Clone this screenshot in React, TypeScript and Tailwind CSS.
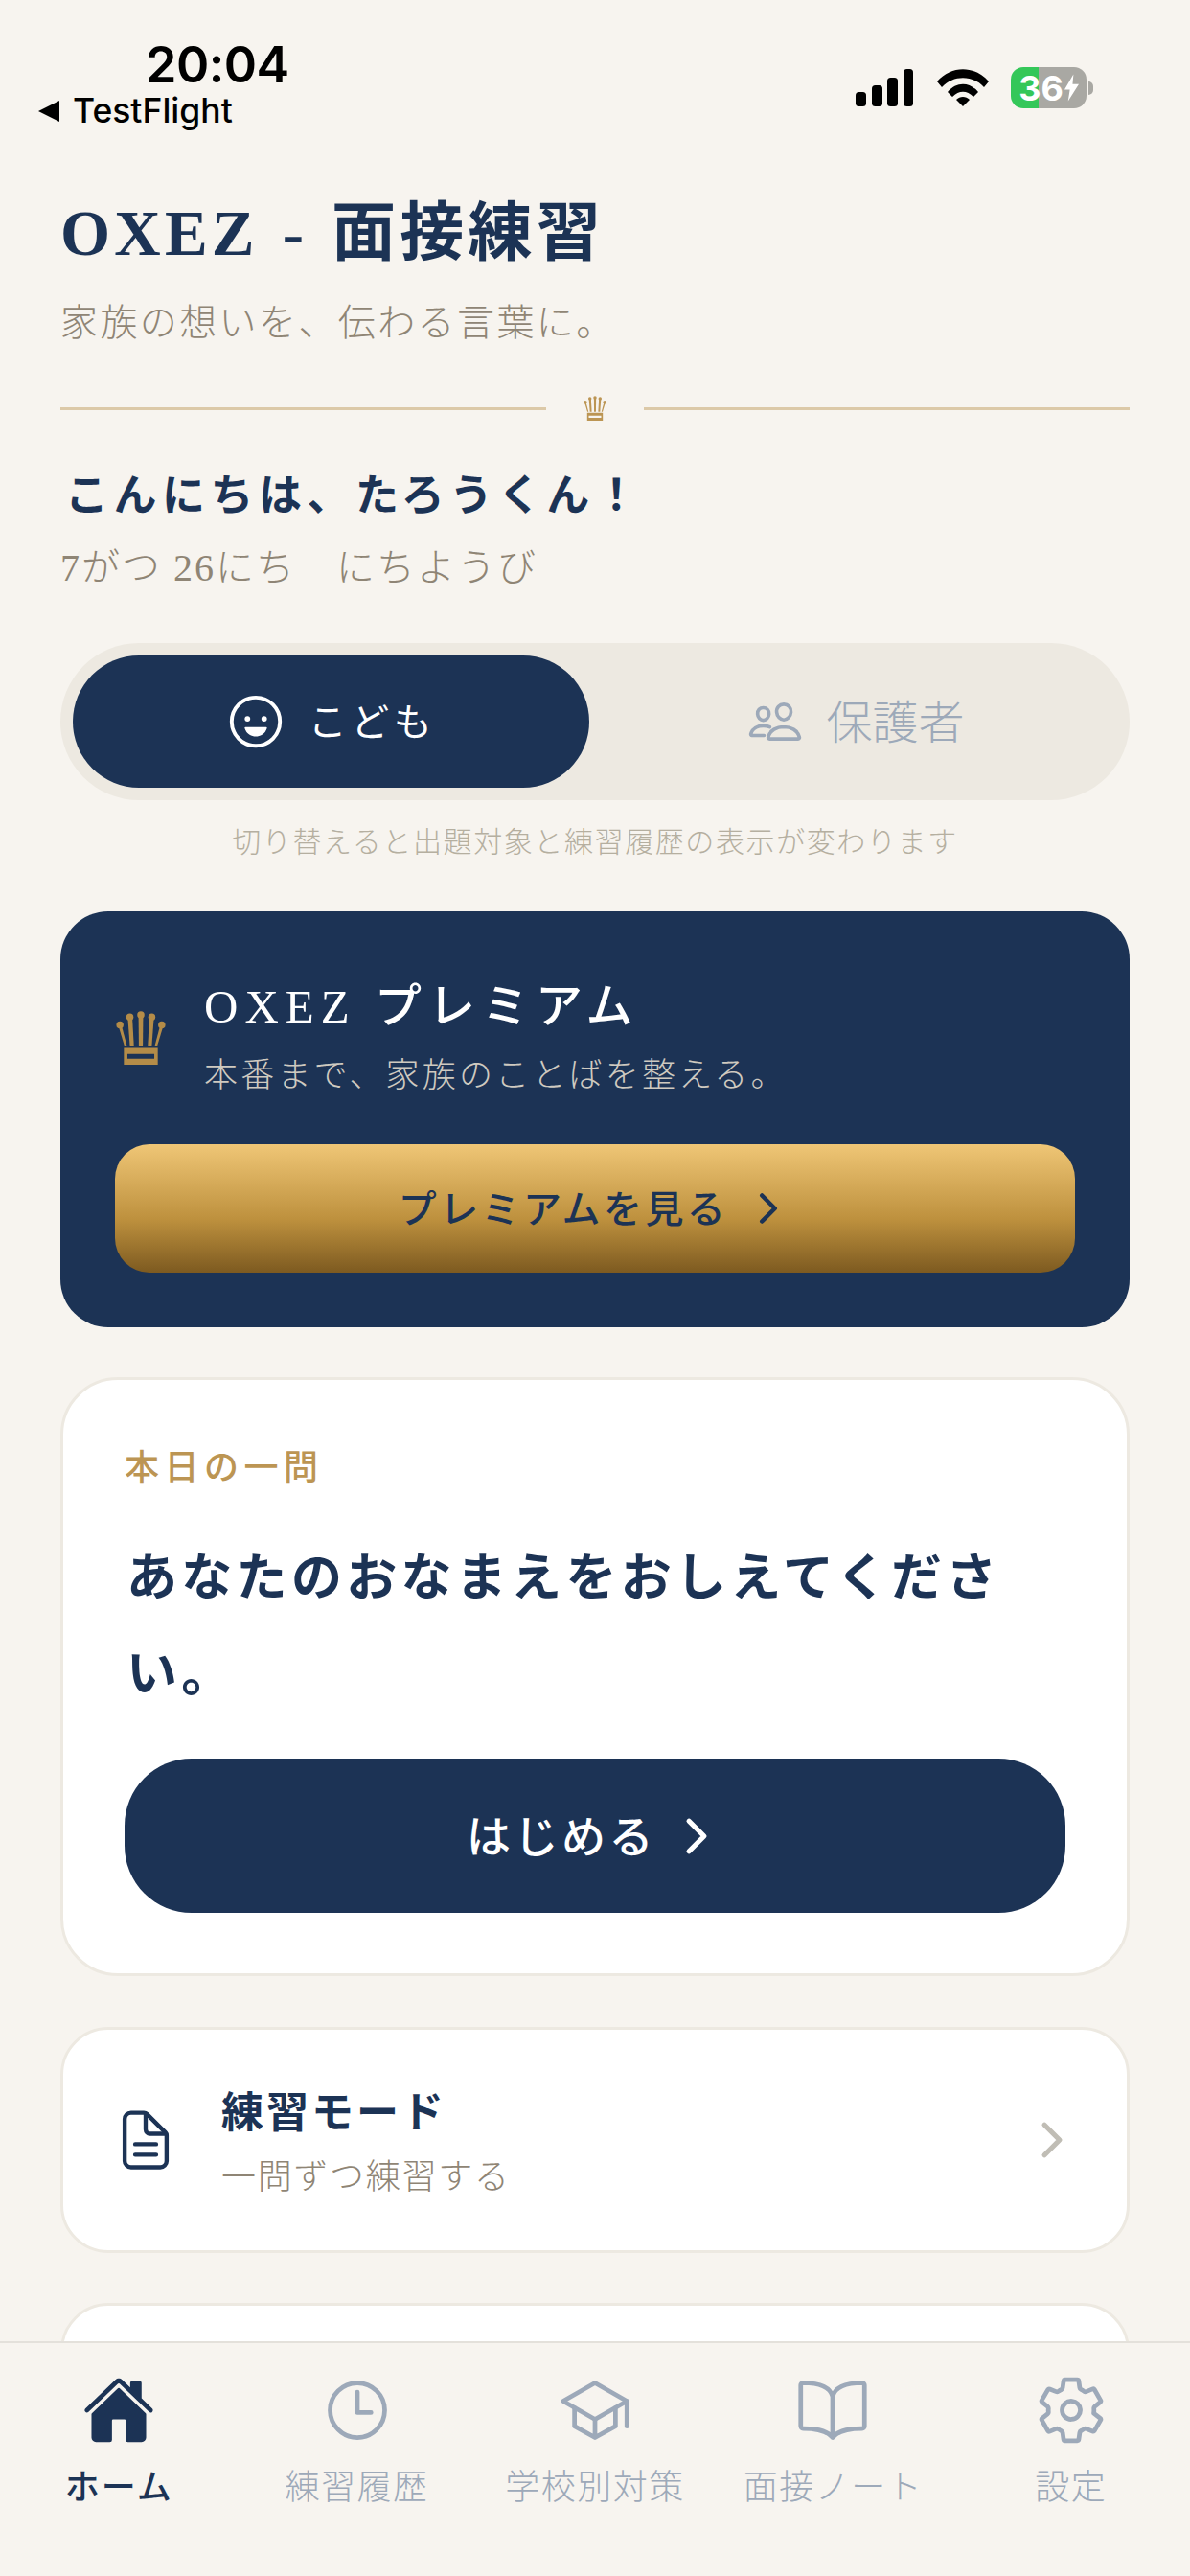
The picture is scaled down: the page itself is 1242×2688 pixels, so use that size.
import {
  IoBookOutline,
  IoChevronForward,
  IoDocumentTextOutline,
  IoHappyOutline,
  IoHome,
  IoPeopleOutline,
  IoSchoolOutline,
  IoSettingsOutline,
  IoTimeOutline,
} from "react-icons/io5";

const Crown = ({ className }: { className: string }) => (
  <svg viewBox="0 0 50 54" className={className} fill="currentColor">
    <circle cx="4" cy="14" r="3.6" />
    <circle cx="14" cy="6" r="3.6" />
    <circle cx="25" cy="4" r="3.6" />
    <circle cx="36" cy="6" r="3.6" />
    <circle cx="46" cy="14" r="3.6" />
    <path d="M2.5 15 L6 16 L11 35 L8.5 35 Z" />
    <path d="M12 8 L16.5 8 L18 35 L14 35 Z" />
    <path d="M22.7 6 L27.3 6 L27 35 L23 35 Z" />
    <path d="M33.5 8 L38 8 L36 35 L32 35 Z" />
    <path d="M47.5 15 L44 16 L39 35 L41.5 35 Z" />
    <path d="M8 37 H42 V54 H8 Z M11.5 43 V48 H38.5 V43 Z" fillRule="evenodd" />
  </svg>
);

const StatusBar = () => (
  <div className="h-[150px] flex justify-between font-['Inter',sans-serif] text-black">
    <div className="flex flex-col">
      <div className="pl-[152px] pt-[38px] text-[52px] leading-[60px] font-semibold tracking-[-0.5px]">
        20:04
      </div>
      <div className="flex items-center pl-[40px] gap-[14px] text-[35.5px] leading-[36px] font-medium">
        <svg viewBox="0 0 22 22" className="w-[22px] h-[22px]" fill="currentColor">
          <path d="M22 0 V22 L0 11 Z" />
        </svg>
        TestFlight
      </div>
    </div>
    <div className="flex items-start pt-[70px] pr-[104px] gap-[23px]">
      <svg viewBox="0 0 60 39" className="w-[60px] h-[39px] mt-[2px]" fill="currentColor">
        <rect x="0" y="24" width="11" height="15" rx="3.5" />
        <rect x="17" y="17" width="11" height="22" rx="3.5" />
        <rect x="33" y="9" width="11" height="30" rx="3.5" />
        <rect x="50" y="0" width="10" height="39" rx="3.5" />
      </svg>
      <svg viewBox="0 0 54 39" className="w-[54px] h-[39px] mt-[2px] ml-[2px]" fill="currentColor">
        <path d="M0 13 C15 -4 39 -4 54 13 L49 19 C37 6 17 6 5 19 Z" />
        <path d="M11 24 C20 13 34 13 43 24 L38 29 C31 22 23 22 16 29 Z" />
        <path d="M20 32 C24 28 30 28 34 32 L27 39 Z" />
      </svg>
      <div className="flex items-center -mr-[3px]">
        <div className="w-[79px] h-[43px] rounded-[13px] bg-[linear-gradient(90deg,#34C759_37%,#A9A8A3_37%)] flex items-center justify-center gap-[1px] text-white text-[36px] font-bold leading-none">
          36
          <svg viewBox="0 0 16 30" className="w-[15px] h-[29px]" fill="currentColor">
            <path d="M10 0 L0 17 H6 L4 30 L16 11 H9 Z" />
          </svg>
        </div>
        <div className="w-[5px] h-[14px] ml-[2px] rounded-r-full bg-[#A9A8A3]" />
      </div>
    </div>
  </div>
);

const NavItem = ({
  icon,
  label,
  active,
}: {
  icon: React.ReactNode;
  label: string;
  active?: boolean;
}) => (
  <div
    className={`flex flex-col items-center ${active ? "text-[#1C3355]" : "text-[#9DA9B9]"}`}
  >
    <div className="h-[76px] w-[76px]">{icon}</div>
    <div
      className={`mt-[19px] text-[36px] leading-[48px] whitespace-nowrap ${active ? "text-[33px] tracking-[2px] font-medium" : "tracking-[1.5px] font-light"}`}
    >
      {label}
    </div>
  </div>
);

export default function App() {
  return (
    <div className="w-[1242px] h-[2688px] overflow-hidden flex flex-col bg-[#F7F4EF] font-['Liberation_Serif','Noto_Sans_CJK_JP',serif] text-[#1C3355]">
      <div className="flex-1 min-h-0 overflow-hidden">
        <StatusBar />
        <div className="px-[63px] pt-[53px]">
          <h1 className="text-[67px] leading-[80px] font-bold tracking-[4.2px] [word-spacing:4px] whitespace-nowrap">
            OXEZ - 面接練習
          </h1>
          <p className="mt-[30px] text-[39px] leading-[48px] tracking-[2.4px] text-[#8F8575] font-light">
            家族の想いを、伝わる言葉に。
          </p>

          <div className="mt-[52px] h-[26px] flex items-start">
            <div className="flex-1 h-[3px] mt-[12px] bg-[#DCC9A8]" />
            <Crown className="w-[26px] h-[26px] mx-[38px] text-[#BC9553]" />
            <div className="flex-1 h-[3px] mt-[12px] bg-[#DCC9A8]" />
          </div>

          <h2 className="mt-[49px] pl-[5px] text-[45px] leading-[60px] font-bold tracking-[5.5px]">
            こんにちは、たろうくん！
          </h2>
          <p className="mt-[21px] text-[40px] leading-[48px] tracking-[2px] text-[#8F8575] font-light whitespace-pre">
            7がつ 26にち　にちようび
          </p>

          <div className="mt-[54px] h-[164px] p-[13px] rounded-full bg-[#EDE9E1] flex">
            <div className="w-[539px] rounded-full bg-[#1C3355] text-white flex items-center justify-center gap-[24px]">
              <IoHappyOutline size={62} />
              <span className="pt-[4px] text-[40px] tracking-[4.5px]">こども</span>
            </div>
            <div className="flex-1 flex items-center justify-center gap-[24px] pl-[6px] text-[#9DA9B9]">
              <IoPeopleOutline size={58} />
              <span className="pt-[4px] text-[48px] font-light">保護者</span>
            </div>
          </div>

          <p className="mt-[24px] text-center text-[30px] leading-[40px] tracking-[1.6px] text-[#B5AFA0] font-light">
            切り替えると出題対象と練習履歴の表示が変わります
          </p>

          <div className="mt-[52px] h-[434px] rounded-[50px] bg-[#1C3355] pt-[70px] px-[57px]">
            <div className="flex items-center">
              <Crown className="w-[52px] h-[58px] ml-[1px] mr-[40px] text-[#B48C48]" />
              <div>
                <div className="text-[49px] leading-[60px] text-white font-medium tracking-[7px]">
                  OXEZ プレミアム
                </div>
                <div className="mt-[20px] text-[35px] leading-[44px] tracking-[3.2px] text-[#CFCAC0] font-light">
                  本番まで、家族のことばを整える。
                </div>
              </div>
            </div>
            <div className="mt-[49px] h-[134px] rounded-[36px] bg-[linear-gradient(180deg,#EFC676_0%,#BE913E_58%,#7D5A20_100%)] flex items-center justify-center gap-[18px]">
              <span className="pt-[4px] text-[40px] font-medium tracking-[3.4px]">プレミアムを見る</span>
              <IoChevronForward size={48} />
            </div>
          </div>

          <div className="mt-[52px] h-[625px] rounded-[60px] bg-white border-[3px] border-[#EDE9E1] pt-[70px] px-[64px]">
            <div className="text-[36px] leading-[44px] font-medium tracking-[5.5px] text-[#BC9553]">
              本日の一問
            </div>
            <div className="mt-[43px] pl-[2px] text-[53px] leading-[100px] font-bold tracking-[4.3px]">
              あなたのおなまえをおしえてください。
            </div>
            <div className="mt-[38px] h-[161px] rounded-[70px] bg-[#1C3355] text-white flex items-center justify-center gap-[14px]">
              <span className="pt-[3px] text-[46px] font-medium tracking-[3.5px]">はじめる</span>
              <IoChevronForward size={56} />
            </div>
          </div>

          <div className="mt-[53px] h-[236px] rounded-[50px] bg-white border-[3px] border-[#EDE9E1] pl-[51px] pr-[50px] flex items-center">
            <IoDocumentTextOutline size={70} />
            <div className="ml-[44px] flex-1 pt-[5px]">
              <div className="text-[44px] leading-[56px] font-bold tracking-[3px]">練習モード</div>
              <div className="mt-[16px] text-[36px] leading-[44px] tracking-[1.7px] text-[#8F8575] font-light">
                一問ずつ練習する
              </div>
            </div>
            <IoChevronForward size={56} className="text-[#C0BDB5]" />
          </div>

          <div className="mt-[52px] h-[236px] rounded-[50px] bg-white border-[3px] border-[#EDE9E1]" />
        </div>
      </div>

      <div className="h-[245px] shrink-0 border-t-2 border-[#E4E1DB] bg-[#F7F4EF] grid grid-cols-5 pt-[32px]">
        <NavItem active icon={<IoHome size={76} />} label="ホーム" />
        <NavItem icon={<IoTimeOutline size={76} />} label="練習履歴" />
        <NavItem icon={<IoSchoolOutline size={76} />} label="学校別対策" />
        <NavItem icon={<IoBookOutline size={76} />} label="面接ノート" />
        <NavItem icon={<IoSettingsOutline size={76} />} label="設定" />
      </div>
    </div>
  );
}
